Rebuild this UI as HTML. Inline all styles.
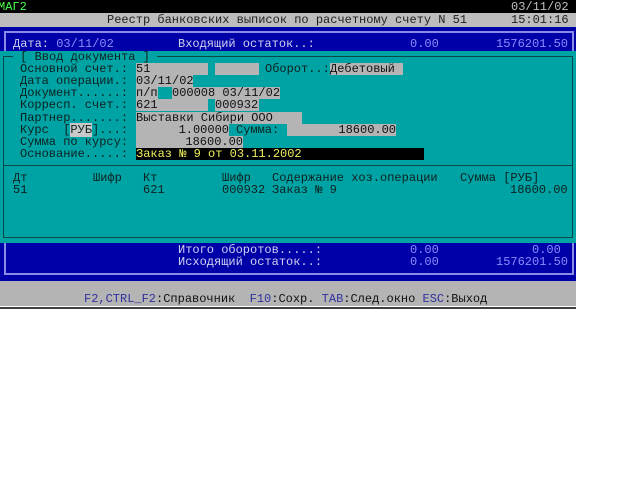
<!DOCTYPE html>
<html><head><meta charset="utf-8"><style>
body{margin:0;width:642px;height:482px;background:#fff;position:relative;overflow:hidden;font-family:"Liberation Mono","DejaVu Sans Mono",monospace;font-size:12px;}
.a{position:absolute;white-space:pre;line-height:12px;height:12px;}
.b{position:absolute;}
.lab{color:#0c2020}
.g{background:#b4b4b4;color:#101010}
</style></head><body>
<div class="b" style="left:0;top:0;width:576px;height:13px;background:#000"></div>
<div class="b" style="left:0;top:13px;width:576px;height:14px;background:#bdbdbd"></div>
<div class="b" style="left:0;top:27px;width:576px;height:24px;background:#0000a8"></div>
<div class="b" style="left:4px;top:31px;width:566px;height:20px;border:2px solid #8a8ae8;border-bottom:none;"></div>
<div class="b" style="left:0;top:51px;width:576px;height:192px;background:#00a3a3"></div>
<div class="b" style="left:3px;top:56px;width:568px;height:180px;border:1px solid #0a4848;"></div>
<div class="b" style="left:3px;top:165px;width:569px;height:1px;background:#0a4848"></div>
<div class="b" style="left:0;top:243px;width:576px;height:38px;background:#0000a8"></div>
<div class="b" style="left:4px;top:243px;width:566px;height:30px;border:2px solid #8a8ae8;border-top:none;"></div>
<div class="b" style="left:0;top:281px;width:576px;height:25px;background:#b4b4b4"></div>
<div class="b" style="left:0;top:307px;width:576px;height:2px;background:#404040"></div>

<div class="a" style="left:-2px;top:1px;color:#4cff4c">МАГ2</div>
<div class="a" style="left:511px;top:1px;color:#c0c0c0">03/11/02</div>
<div class="a" style="left:107px;top:14px;color:#202020">Реестр банковских выписок по расчетному счету N 51</div>
<div class="a" style="left:511px;top:14px;color:#202020">15:01:16</div>
<div class="a" style="left:13px;top:38px;color:#d0d0f0">Дата: <span style="color:#8c8cff">03/11/02</span></div>
<div class="a" style="left:178px;top:38px;color:#d0d0f0">Входящий остаток..:</div>
<div class="a" style="left:410px;top:38px;color:#8c8cff">0.00</div>
<div class="a" style="left:496px;top:38px;color:#8c8cff">1576201.50</div>

<div class="a lab" style="left:13px;top:51px;background:#00a3a3"> [ Ввод документа ] </div>
<div class="a lab" style="left:20px;top:63px">Основной счет.:</div>
<div class="a g" style="left:136px;top:63px;width:72px">51</div>
<div class="a g" style="left:215px;top:63px;width:44px"></div>
<div class="a lab" style="left:265px;top:63px">Оборот..:</div>
<div class="a g" style="left:330px;top:63px;width:73px">Дебетовый</div>
<div class="a lab" style="left:20px;top:75px">Дата операции.:</div>
<div class="a g" style="left:136px;top:75px;width:57px">03/11/02</div>
<div class="a lab" style="left:20px;top:87px">Документ......:</div>
<div class="a g" style="left:136px;top:87px;width:22px">п/п</div>
<div class="a g" style="left:172px;top:87px;width:108px">000008 03/11/02</div>
<div class="a lab" style="left:20px;top:99px">Корресп. счет.:</div>
<div class="a g" style="left:136px;top:99px;width:72px">621</div>
<div class="a g" style="left:215px;top:99px;width:44px">000932</div>
<div class="a lab" style="left:20px;top:112px">Партнер.......:</div>
<div class="a g" style="left:136px;top:112px;width:166px">Выставки Сибири ООО</div>
<div class="a lab" style="left:20px;top:124px">Курс  [<span style="background:#c8c8c8">РУБ</span>]...:</div>
<div class="a g" style="left:136px;top:124px;width:93px;text-align:right">1.00000</div>
<div class="a lab" style="left:236px;top:124px">Сумма:</div>
<div class="a g" style="left:287px;top:124px;width:109px;text-align:right">18600.00</div>
<div class="a lab" style="left:20px;top:136px">Сумма по курсу:</div>
<div class="a g" style="left:136px;top:136px;width:107px;text-align:right">18600.00</div>
<div class="a lab" style="left:20px;top:148px">Основание.....:</div>
<div class="a" style="left:136px;top:148px;width:288px;background:#000;color:#f0f060">Заказ № 9 от 03.11.2002</div>

<div class="a lab" style="left:13px;top:172px">Дт</div>
<div class="a lab" style="left:93px;top:172px">Шифр</div>
<div class="a lab" style="left:143px;top:172px">Кт</div>
<div class="a lab" style="left:222px;top:172px">Шифр</div>
<div class="a lab" style="left:272px;top:172px">Содержание хоз.операции</div>
<div class="a lab" style="left:460px;top:172px">Сумма [РУБ]</div>
<div class="a lab" style="left:13px;top:184px">51</div>
<div class="a lab" style="left:143px;top:184px">621</div>
<div class="a lab" style="left:222px;top:184px">000932</div>
<div class="a lab" style="left:272px;top:184px">Заказ № 9</div>
<div class="a lab" style="left:510px;top:184px">18600.00</div>

<div class="a" style="left:178px;top:244px;color:#d0d0f0">Итого оборотов.....:</div>
<div class="a" style="left:410px;top:244px;color:#8c8cff">0.00</div>
<div class="a" style="left:532px;top:244px;color:#8c8cff">0.00</div>
<div class="a" style="left:178px;top:256px;color:#d0d0f0">Исходящий остаток..:</div>
<div class="a" style="left:410px;top:256px;color:#8c8cff">0.00</div>
<div class="a" style="left:496px;top:256px;color:#8c8cff">1576201.50</div>

<div class="a" style="left:84px;top:293px;color:#101010"><span style="color:#3030a0">F2,CTRL_F2</span>:Справочник  <span style="color:#3030a0">F10</span>:Сохр. <span style="color:#3030a0">TAB</span>:След.окно <span style="color:#3030a0">ESC</span>:Выход</div>
</body></html>
